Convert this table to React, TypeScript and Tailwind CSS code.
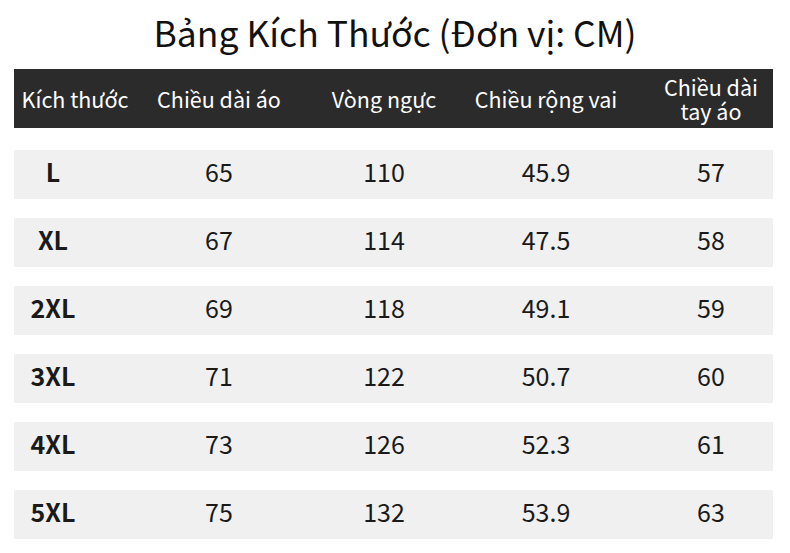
import React from 'react';

const rows = [
  { size: 'L', dai: '65', nguc: '110', vai: '45.9', tay: '57' },
  { size: 'XL', dai: '67', nguc: '114', vai: '47.5', tay: '58' },
  { size: '2XL', dai: '69', nguc: '118', vai: '49.1', tay: '59' },
  { size: '3XL', dai: '71', nguc: '122', vai: '50.7', tay: '60' },
  { size: '4XL', dai: '73', nguc: '126', vai: '52.3', tay: '61' },
  { size: '5XL', dai: '75', nguc: '132', vai: '53.9', tay: '63' },
];

const grid = 'grid grid-cols-[130px_150px_180px_150px_149px] items-center';

export default function App() {
  return (
    <div
      className="w-[790px] h-[553px] bg-white text-[#1a1a1a] overflow-hidden"
      style={{ fontFamily: '"Noto Sans CJK SC", "Noto Sans", "Liberation Sans", sans-serif' }}
    >
      <h1 className="text-center text-[35.5px] leading-none pt-[14px] h-[69px] text-[#111]">
        Bảng Kích Thước (Đơn vị: CM)
      </h1>

      <div className="mx-[14px] w-[759px]">
        <div className={`${grid} h-[59px] bg-[#2b2b2b] text-white text-[21.5px] leading-[24px]`}>
          <div className="text-center pr-[8px]">Kích thước</div>
          <div className="text-center">Chiều dài áo</div>
          <div className="text-center">Vòng ngực</div>
          <div className="text-center pr-[6px]">Chiều rộng vai</div>
          <div className="text-center pl-[25px]">
            Chiều dài
            <br />
            tay áo
          </div>
        </div>

        <div className="flex flex-col gap-[19px] pt-[22px]">
          {rows.map((r) => (
            <div key={r.size} className={`${grid} h-[49px] pb-[5px] bg-[#f0f0f0] text-[25px]`}>
              <div className="text-center pr-[52px] font-bold text-[25px]">{r.size}</div>
              <div className="text-center">{r.dai}</div>
              <div className="text-center">{r.nguc}</div>
              <div className="text-center pr-[6px]">{r.vai}</div>
              <div className="text-center pl-[25px]">{r.tay}</div>
            </div>
          ))}
        </div>
      </div>
    </div>
  );
}
